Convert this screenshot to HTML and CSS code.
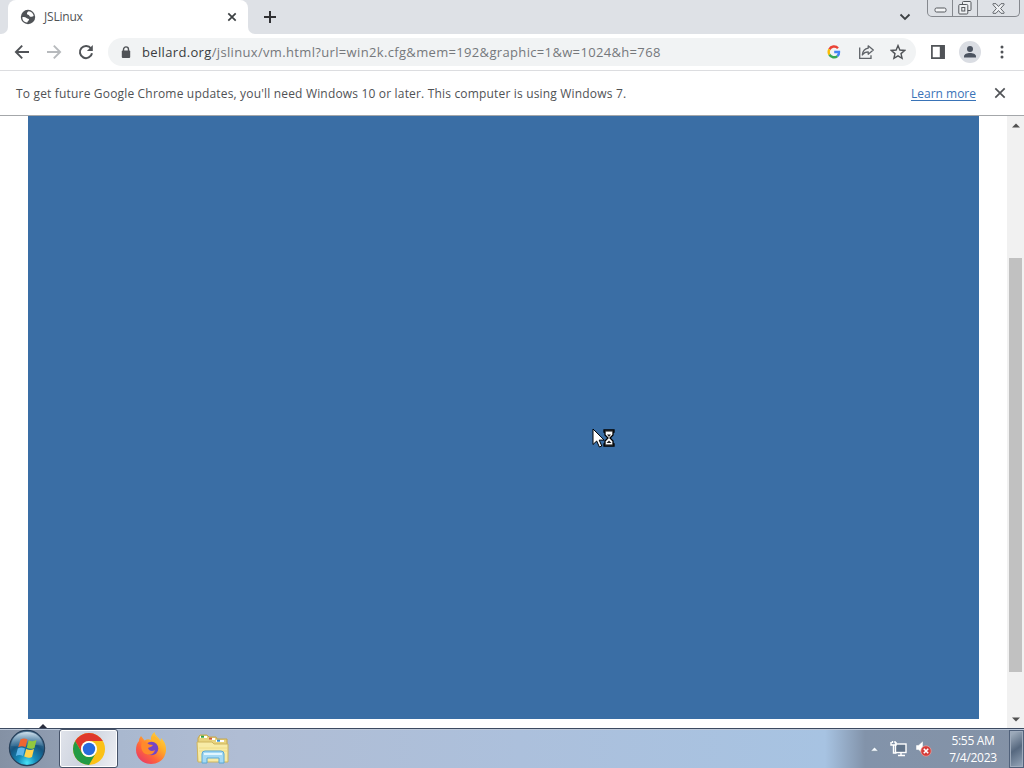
FILE: index.html
```html
<!DOCTYPE html>
<html lang="en">
<head>
<meta charset="utf-8">
<title>JSLinux</title>
<link rel="stylesheet" href="styles.css">
</head>
<body>
<div class="desktop">
  <header class="tabstrip">
    <div class="before-tab"></div>
    <div class="tab">
      <svg class="globe" width="16" height="16" viewBox="0 0 16 16"><circle cx="8" cy="8" r="7.2" fill="#505357"/><path d="M2.300 8.300c1.500-.6 3.200-.3 4.200.8 1 .8 2.500.6 2.600 1.700 0 1-1.500 1-1.800 2.700-2.800.2-5-2-5-5.200zM8.800 2.200c-1.500.8-2 1.600-1.800 2.700.3 1 1.800.6 2.200 1.700.4 1.200 1.500 1.500 2.700 1.100l1.800-.6c-.3-2.800-2.300-4.700-4.900-4.900z" fill="#fff"/></svg>
      <span class="tab-title">JSLinux</span>
      <svg class="tab-close" width="10" height="10" viewBox="0 0 10 10"><path d="M1.300 1.300l7.400 7.400M8.700 1.300L1.300 8.700" stroke="#3c4043" stroke-width="1.700"/></svg>
    </div>
    <div class="after-tab">
      <svg class="new-tab" width="14" height="14" viewBox="0 0 14 14"><path d="M7 1v12M1 7h12" stroke="#303134" stroke-width="2"/></svg>
      <svg class="tab-search" width="12" height="8" viewBox="0 0 12 8"><path d="M1.500 1.500L6 6l4.500-4.500" fill="none" stroke="#3c4043" stroke-width="1.800"/></svg>
      <div class="caption">
        <div class="cap"><svg width="13" height="6" viewBox="0 0 13 6"><rect x="1" y="1" width="11" height="4" rx="1.500" fill="#f4f5f7" stroke="#55585d"/></svg></div>
        <div class="cap mid"><svg width="14" height="14" viewBox="0 0 14 14" fill="#eef0f3" stroke="#55585d"><rect x="4.500" y=".5" width="8.500" height="9" rx="1"/><rect x=".8" y="3.500" width="9" height="9.500" rx="1"/><rect x="3.800" y="6.500" width="3" height="3.500"/></svg></div>
        <div class="cap wide"><svg width="13" height="11" viewBox="0 0 13 11"><path d="M1 .7h3L6.500 3.500 9 .7h3v1L8.600 5.500 12 9.300v1H9L6.500 7.500 4 10.300H1v-1l3.400-3.800L1 1.700z" fill="#eef0f3" stroke="#55585d" stroke-width=".9"/></svg></div>
      </div>
    </div>
  </header>

  <nav class="toolbar">
    <svg class="nav-icon" width="16" height="16" viewBox="0 0 16 16"><path d="M15 8H2M8.200 1.700L1.900 8l6.300 6.300" fill="none" stroke="#505357" stroke-width="1.900"/></svg>
    <svg class="nav-icon" width="16" height="16" viewBox="0 0 16 16"><path d="M1 8h13M7.800 1.700L14.100 8l-6.300 6.300" fill="none" stroke="#b7babd" stroke-width="1.900"/></svg>
    <svg class="nav-icon" width="16" height="16" viewBox="0 0 16 16"><path d="M13 4.500A6.100 6.100 0 1 0 14 9.200" fill="none" stroke="#505357" stroke-width="2"/><path d="M14.800 1v6H8.900z" fill="#505357"/></svg>
    <div class="omnibox">
      <svg class="lock" width="10" height="13" viewBox="0 0 10 13"><path d="M2.500 5V3.400a2.500 2.500 0 0 1 5 0V5" fill="none" stroke="#505357" stroke-width="1.400"/><rect x=".8" y="4.600" width="8.400" height="7.500" rx="1" fill="#505357"/></svg>
      <span class="url"><b>bellard.org</b>/jslinux/vm.html?url=win2k.cfg&amp;mem=192&amp;graphic=1&amp;w=1024&amp;h=768</span>
      <svg class="google" width="14" height="14" viewBox="0 0 14 14" fill="none" stroke-width="2.400"><path d="M11 3.200A5.300 5.300 0 0 0 2.400 4.400" stroke="#ea4335"/><path d="M2.400 4.400a5.300 5.300 0 0 0 0 5.200" stroke="#fbbc05"/><path d="M2.400 9.600a5.300 5.300 0 0 0 8 1.500" stroke="#34a853"/><path d="M10.400 11.100A5 5 0 0 0 12 7H7.200" stroke="#4285f4"/></svg>
      <svg class="share" width="17" height="16" viewBox="0 0 17 16" fill="none" stroke="#5f6368" stroke-width="1.300"><path d="M1.700 3.500v10.800H13v-3"/><path d="M10.200 1.800L15.300 6l-5.100 4.200V7.800C7.500 7.800 5.800 8.700 4.300 11c.4-3.600 2.300-6.300 5.900-6.800z" stroke-linejoin="round"/></svg>
      <svg class="star" width="16" height="16" viewBox="0 0 16 16"><path d="M8 1.600l1.850 4.450 4.800.4-3.650 3.150 1.100 4.700L8 11.800l-4.100 2.500L5 9.600 1.350 6.450l4.800-.4z" fill="none" stroke="#505357" stroke-width="1.400"/></svg>
    </div>
    <svg class="panel" width="14" height="14" viewBox="0 0 14 14"><path d="M.9.900h12.200v12.200H.9z" fill="none" stroke="#505357" stroke-width="1.700"/><path d="M8.800 1h4.500v12H8.800z" fill="#505357"/></svg>
    <svg class="avatar" width="22" height="22" viewBox="0 0 22 22"><circle cx="11" cy="11" r="11" fill="#dadde3"/><circle cx="11" cy="8" r="3" fill="#4b5360"/><path d="M5 16.500v-1.200c0-2.100 3.200-3.300 6-3.300s6 1.200 6 3.300v1.200z" fill="#4b5360"/></svg>
    <svg class="kebab" width="4" height="14" viewBox="0 0 4 14" fill="#505357"><circle cx="2" cy="2" r="1.500"/><circle cx="2" cy="7" r="1.500"/><circle cx="2" cy="12" r="1.500"/></svg>
  </nav>

  <section class="infobar">
    <span class="notice">To get future Google Chrome updates, you'll need Windows 10 or later. This computer is using Windows 7.</span>
    <a class="learn">Learn more</a>
    <svg width="12" height="12" viewBox="0 0 12 12"><path d="M1.300 1.300l9.400 9.400M10.700 1.300l-9.400 9.400" stroke="#505357" stroke-width="1.700"/></svg>
  </section>

  <main class="page">
    <div class="content">
      <div class="screen">
        <svg class="pointer" width="26" height="22" viewBox="0 0 26 22"><path d="M1 1v15.500l3.700-3.500 2.700 6 2.400-1-2.600-5.900h5z" fill="#fff" stroke="#000"/><path d="M12 2h10v2h-1v3l-3 3 3 3v3h1v2H12v-2h1v-3l3-3-3-3V4h-1z" fill="#fff" stroke="#000" stroke-width="1.300"/><path d="M12 3h10M12 17h10" stroke="#000"/><path d="M15 6.500h4L17 9zM14.500 15l2.500-2.500 2.500 2.500z" fill="#222"/></svg>
      </div>
      <svg class="peek" width="8" height="4" viewBox="0 0 8 4"><path d="M0 4L4 0l4 4z" fill="#292d3d"/></svg>
    </div>
    <div class="scrollbar">
      <svg width="8" height="5" viewBox="0 0 8 5"><path d="M0 4.500L4 .5l4 4z" fill="#505050"/></svg>
      <div class="thumb"></div>
      <svg width="8" height="5" viewBox="0 0 8 5"><path d="M0 .5l4 4 4-4z" fill="#505050"/></svg>
    </div>
  </main>

  <footer class="taskbar">
    <svg class="start" width="38" height="38" viewBox="0 0 38 38">
      <defs><radialGradient id="orb" cx=".5" cy=".92" r=".85"><stop offset="0" stop-color="#48e3f7"/><stop offset=".3" stop-color="#168cba"/><stop offset=".65" stop-color="#155580"/><stop offset="1" stop-color="#567a98"/></radialGradient><linearGradient id="gloss" x2="0" y2="1"><stop stop-color="#e4f2fa" stop-opacity=".85"/><stop offset="1" stop-color="#78a8c8" stop-opacity=".2"/></linearGradient></defs>
      <circle cx="19" cy="19" r="17.600" fill="url(#orb)" stroke="#263f59" stroke-width="1.200"/><path d="M3 17C4 8 10 3 19 3s15 5 16 14c-9-3-23 2-32 0z" fill="url(#gloss)"/>
      <path d="M12.500 10.500c2.500-1.600 4.800-1.300 7 0l-2 7.700c-2.200-1.300-4.600-1.500-7.300 0z" fill="#ee6532"/><path d="M20.700 11.200c2.500 1.300 5 1.300 7.800-.1l-2 7.800c-2.700 1.300-5.100 1.200-7.700-.2z" fill="#92c83e"/><path d="M9.800 19.500c2.400-1.500 4.800-1.300 7.200 0l-2 7.500c-2.200-1.300-4.600-1.500-7.200 0z" fill="#5db5e9"/><path d="M18.200 20c2.600 1.400 5 1.400 7.800.1l-2 7.800c-2.700 1.300-5.200 1.100-7.800-.3z" fill="#ffd34c"/>
    </svg>
    <div class="task active">
      <svg width="34" height="34" viewBox="0 0 34 34"><circle cx="17" cy="17" r="16" fill="#fbc116"/><path d="M3.150 9A16 16 0 0 1 30.850 9H17a8 8 0 0 0-6.930 12z" fill="#df382c"/><path d="M3.150 9A16 16 0 0 0 17 33l6.930-12a8 8 0 0 1-13.860 0z" fill="#229a45"/><circle cx="17" cy="17" r="8" fill="#fff"/><circle cx="17" cy="17" r="6.200" fill="#286bdc"/></svg>
    </div>
    <svg class="firefox" width="32" height="32" viewBox="0 0 32 32">
      <defs><linearGradient id="fire" x1="1" y1="0" x2=".2" y2="1"><stop stop-color="#ffe04b"/><stop offset=".4" stop-color="#ffac29"/><stop offset=".7" stop-color="#ff643b"/><stop offset="1" stop-color="#e83967"/></linearGradient></defs>
      <path d="M6 4l3.500 4.500C12 7 14 7 16 8c-.5-4 1.500-6 3.500-8 .5 4 4.500 5 6 9l.5-3c4 4 5.500 8 5 13C30 27 24 32 16 32S1 26 1 18c0-4 1-7 3-9 0-2 .8-3.500 2-5z" fill="url(#fire)"/><circle cx="16.500" cy="16.500" r="6.800" fill="#7645c7"/><path d="M7 10c3 0 5 .4 7 2.500l4 .5c-1 2-4 2-5 3 1 3 4 4 7 2-1 4-5 6-9 4-4-1-6-7-4-12z" fill="#ff8a2b"/><path d="M16 8c5 0 9 3 8.500 8 2-3 1-7-2-9L19 4z" fill="#ffb52d"/>
    </svg>
    <svg class="explorer" width="34" height="32" viewBox="0 0 34 32">
      <path d="M2 4l2-3h7l2 2h7l1 2h10v22H2z" fill="#e8d37d" stroke="#c4a64e"/><path d="M4 3h7M13 5h6M20 7h8" stroke="#fff" stroke-width="2"/><path d="M5 2.700h3" stroke="#29a342" stroke-width="2"/><path d="M13 4.700h3" stroke="#d35b31" stroke-width="2"/><path d="M21 6.700h3" stroke="#338fd1" stroke-width="2"/><path d="M1 8h15l2 2h14v18H2z" fill="#f7eba6" stroke="#cfb55f"/><path d="M3 14h28M3 17h28" stroke="#f0dc86"/>
      <path d="M6 29V20q0-3 3-3h16q3 0 3 3v9h-5v-5H11v5z" fill="#a4d9f4" stroke="#5aa8d5"/><path d="M8 20h18" stroke="#e1f6ff" stroke-width="2"/>
    </svg>
    <div class="tray">
      <svg class="arrow" width="9" height="6" viewBox="0 0 9 6"><path d="M.5 5.200l4-4.200 4 4.200z" fill="#f4f9ff" stroke="#65778c" stroke-width=".6"/></svg>
      <svg class="network" width="17" height="16" viewBox="0 0 17 16"><rect x="5.500" y="3" width="10.500" height="8.500" fill="#62748a" stroke="#fff" stroke-width="1.400"/><path d="M8 14.500h7M11 12v2M1 1v3h5V1M3.500 4v8h3M2.500 0v2M5 0v2" fill="none" stroke="#fff" stroke-width="1.400"/></svg>
      <svg class="volume" width="17" height="17" viewBox="0 0 17 17"><path d="M1 5h2.500L8 1v13l-4.500-4H1z" fill="#fff" stroke="#8392a4" stroke-width=".5"/><circle cx="11" cy="11" r="5.200" fill="#d63c39" stroke="#eda49d" stroke-width=".7"/><path d="M8.800 8.800l4.400 4.400M13.200 8.800l-4.400 4.400" stroke="#fff" stroke-width="1.600"/></svg>
      <div class="clock"><span>5:55 AM</span><span class="date">7/4/2023</span></div>
      <div class="show-desktop"></div>
    </div>
  </footer>
</div>
</body>
</html>
```
FILE: styles.css
```css
* { box-sizing: border-box; }
body { margin: 0; overflow: hidden; font: 13px/18px "Open Sans", "Noto Sans", sans-serif; color: #505255; }
svg { display: block; flex: none; }
.desktop { width: 1024px; height: 768px; display: flex; flex-direction: column; background: #fff; }
.tabstrip { height: 34px; flex: none; display: flex; background: #fff; }
.before-tab { width: 8px; background: #dee1e6; border-bottom-right-radius: 7px; }
.tab { width: 240px; display: flex; align-items: center; padding: 0 11px 0 12px; background: linear-gradient(#dee1e6 0 8px, transparent 8px); position: relative; z-index: 0; }
.tab::before { content: ""; position: absolute; inset: 0; background: #fff; border-radius: 8px 8px 0 0; z-index: -1; }
.tab-title { margin-left: 8px; font-size: 12px; letter-spacing: -.2px; }
.tab-close { margin-left: auto; }
.after-tab { flex: 1; display: flex; align-items: center; padding: 0 4px 0 15px; background: #dee1e6; border-bottom-left-radius: 7px; }
.tab-search { margin-left: auto; margin-right: 16px; }
.caption { display: flex; height: 17px; align-self: flex-start; border: 1px solid #85888e; border-top: 0; border-radius: 0 0 5px 5px; }
.cap { width: 25px; display: flex; align-items: center; justify-content: center; border-right: 1px solid #85888e; }
.cap:first-child { padding-top: 4px; }
.cap.wide { width: 41px; border: 0; }
.toolbar { height: 37px; flex: none; display: flex; align-items: center; padding: 0 20px 0 14px; border-bottom: 1px solid #dcdde0; }
.nav-icon { margin-right: 16px; }
.omnibox { width: 808px; height: 28px; margin-left: -2px; display: flex; align-items: center; padding: 0 10px 0 13px; border-radius: 14px; background: #f1f3f4; }
.url { margin-left: 11px; white-space: nowrap; color: #75787c; letter-spacing: .34px; }
.url b { font-weight: 400; color: #3a3c40; }
.google { margin-left: auto; }
.share { margin-left: 17px; }
.star { margin-left: 15px; }
.panel { margin-left: 15px; }
.avatar { margin-left: 14px; }
.kebab { margin-left: auto; }
.infobar { height: 45px; flex: none; display: flex; align-items: center; padding: 0 18px 0 16px; border-bottom: 1px solid #a4a7aa; }
.notice { padding-top: 1px; white-space: nowrap; font-size: 12px; letter-spacing: .175px; }
.learn { padding-top: 1px; margin-left: auto; margin-right: 18px; font-size: 12px; color: #3973b7; text-decoration: underline; text-underline-offset: 2px; }
.page { flex: 1; min-height: 0; display: flex; }
.content { width: 1007px; padding: 0 28px; }
.screen { height: 603px; background: #3a6ea5; position: relative; }
.pointer { position: absolute; left: 564px; top: 312px; }
.peek { margin: 5px 0 0 11px; }
.scrollbar { width: 17px; display: flex; flex-direction: column; align-items: center; background: #f1f1f1; padding-top: 7px; }
.thumb { width: 13px; height: 414px; margin: 130px 0 45px; background: #c1c1c1; }
.taskbar { height: 40px; flex: none; display: flex; border-top: 1px solid #3c4a60; background: linear-gradient(90deg, #8491a4 0, #909db1 58px, #a9b8cf 120px, #b0bdd4 240px, #acc0dc 520px, #a7c3e2 825px, #8293aa 865px, #8492a6 100%); box-shadow: inset 0 1px #bdc9da; }
.start { margin-left: 8px; }
.task { height: 39px; width: 59px; margin-left: 13px; display: flex; align-items: center; justify-content: center; border: 1px solid #465369; border-radius: 3px; background: linear-gradient(110deg, #e1e4eb, #cdd3df 45%, #eef0f4); box-shadow: inset 0 0 0 1px #fff; }
.firefox { margin: 3px 0 0 17px; }
.explorer { margin: 5px 0 0 29px; }
.tray { margin-left: auto; display: flex; height: 39px; align-items: center; color: #fff; }
.arrow { margin-top: 1px; }
.network { margin-left: 11px; }
.volume { margin-left: 8px; }
.clock { width: 76px; display: flex; flex-direction: column; align-items: center; font-size: 12px; line-height: 17px; letter-spacing: -.3px; padding: 1px 0 0 6px; }
.show-desktop { width: 15px; height: 38px; margin-left: 1px; border: 1px solid #50617a; background: linear-gradient(145deg, #9ba9b9 10%, #56687f 50%, #97a7ba); box-shadow: inset 0 0 0 1px #9eabbc; }
```
